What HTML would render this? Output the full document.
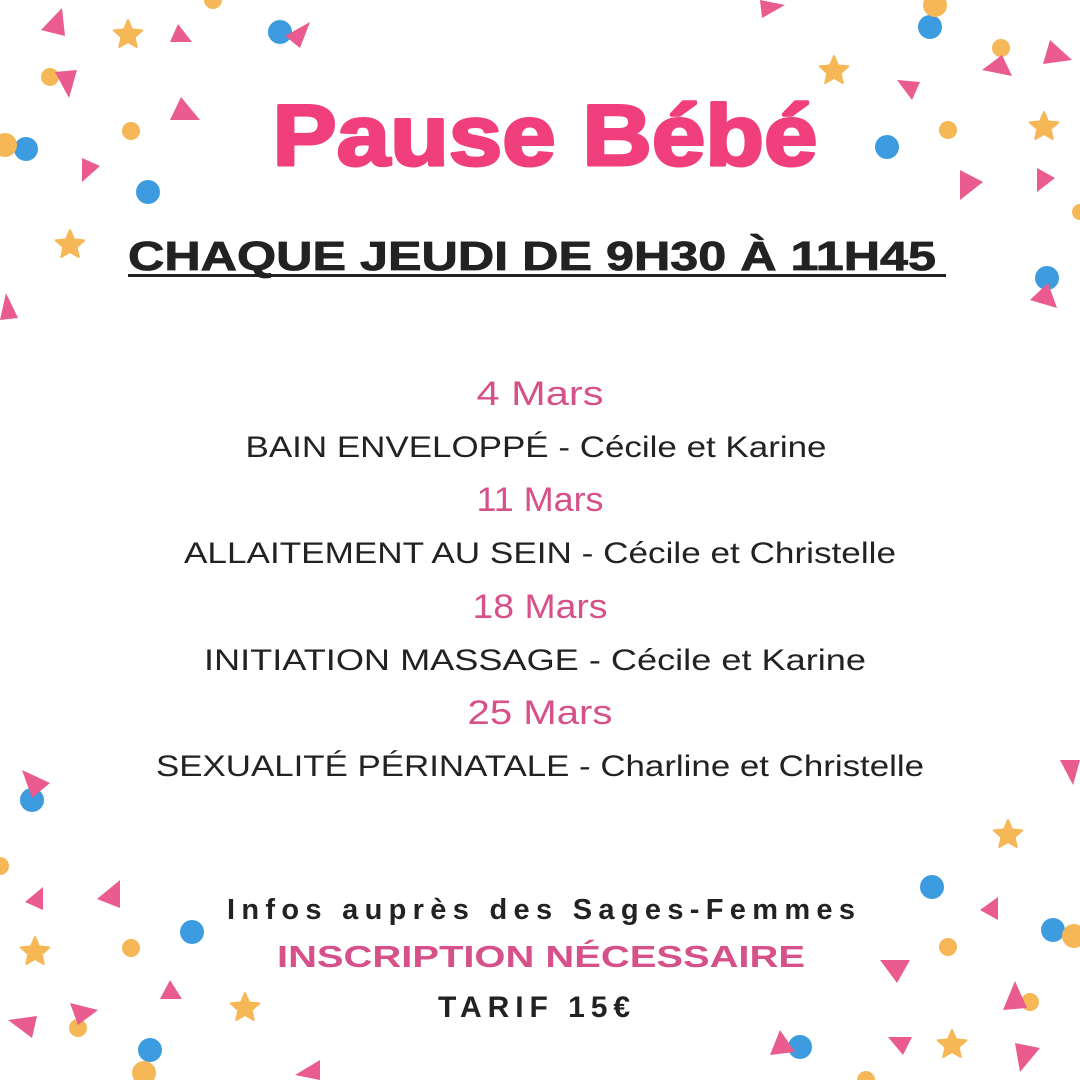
<!DOCTYPE html>
<html><head><meta charset="utf-8"><style>
html,body{margin:0;padding:0;background:#fff}
svg{display:block}
</style></head><body>
<svg width="1080" height="1080" viewBox="0 0 1080 1080" xmlns="http://www.w3.org/2000/svg">
<defs>
<polygon id="st" points="0,-15 4,-5.6 14.3,-4.6 6.6,2.2 8.8,12 0,7 -8.8,12 -6.6,2.2 -14.3,-4.6 -4,-5.6" fill="#f6b757" stroke="#f6b757" stroke-width="2" stroke-linejoin="round"/>
</defs>
<rect width="1080" height="1080" fill="#fff"/>
<g fill="#3d9be0">
<circle cx="280" cy="32" r="12"/><circle cx="26" cy="149" r="12"/><circle cx="148" cy="192" r="12"/>
<circle cx="930" cy="27" r="12"/><circle cx="887" cy="147" r="12"/><circle cx="1047" cy="278" r="12"/>
<circle cx="32" cy="800" r="12"/><circle cx="192" cy="932" r="12"/><circle cx="150" cy="1050" r="12"/>
<circle cx="932" cy="887" r="12"/><circle cx="1053" cy="930" r="12"/><circle cx="800" cy="1047" r="12"/>
</g>
<g fill="#f6b757">
<circle cx="935" cy="5" r="12"/><circle cx="50" cy="77" r="9"/><circle cx="131" cy="131" r="9"/><circle cx="5" cy="145" r="12"/>
<circle cx="1001" cy="48" r="9"/><circle cx="948" cy="130" r="9"/><circle cx="1080" cy="212" r="8"/>
<circle cx="0" cy="866" r="9"/><circle cx="131" cy="948" r="9"/><circle cx="78" cy="1028" r="9"/><circle cx="144" cy="1073" r="12"/><circle cx="213" cy="0" r="9"/>
<circle cx="1074" cy="936" r="12"/><circle cx="948" cy="947" r="9"/><circle cx="1030" cy="1002" r="9"/><circle cx="866" cy="1080" r="9"/>
</g>
<g fill="#ea5b8f">
<polygon points="62,8 65,36 41,30"/><polygon points="170,42 192,42 178,24"/><polygon points="285,36 310,22 300,48"/>
<polygon points="55,72 77,70 69,98"/><polygon points="170,120 200,120 181,97"/><polygon points="82,158 82,182 100,166"/>
<polygon points="0,320 18,318 6,293"/>
<polygon points="760,0 785,5 762,18"/><polygon points="897,80 920,82 912,100"/><polygon points="982,70 1012,76 1002,55"/>
<polygon points="1043,64 1072,60 1050,40"/><polygon points="960,170 960,200 983,182"/><polygon points="1037,168 1037,192 1055,178"/>
<polygon points="1030,300 1057,308 1048,283"/>
<polygon points="22,770 50,783 32,798"/><polygon points="43,887 43,910 25,902"/><polygon points="120,880 120,908 97,899"/>
<polygon points="160,999 182,999 170,980"/><polygon points="8,1020 37,1016 32,1038"/><polygon points="70,1003 98,1010 78,1025"/>
<polygon points="295,1075 320,1060 320,1080"/>
<polygon points="1060,760 1080,760 1073,785"/><polygon points="998,897 998,920 980,910"/><polygon points="880,960 910,960 897,983"/>
<polygon points="1015,981 1003,1010 1027,1008"/><polygon points="780,1030 795,1052 770,1055"/><polygon points="888,1037 912,1037 903,1055"/>
<polygon points="1015,1043 1040,1048 1020,1072"/>
</g>
<use href="#st" x="128" y="35"/><use href="#st" x="834" y="71"/><use href="#st" x="1044" y="127"/><use href="#st" x="70" y="245"/>
<use href="#st" x="1008" y="835"/><use href="#st" x="35" y="952"/><use href="#st" x="245" y="1008"/><use href="#st" x="952" y="1045"/>

<g font-family="Liberation Sans, sans-serif" text-anchor="middle">
<text x="545" y="165" font-size="86" font-weight="bold" fill="#f03f7c" stroke="#f03f7c" stroke-width="3" stroke-linejoin="round" textLength="545" lengthAdjust="spacingAndGlyphs">Pause Bébé</text>
<text x="532" y="270" font-size="41" font-weight="bold" fill="#222" stroke="#222" stroke-width="0.8" textLength="808" lengthAdjust="spacingAndGlyphs">CHAQUE JEUDI DE 9H30 À 11H45</text>
<rect x="128" y="274" width="818" height="3" fill="#222"/>
<g font-size="34" fill="#d6508a">
<text x="540" y="405" textLength="127" lengthAdjust="spacingAndGlyphs">4 Mars</text>
<text x="540" y="511" textLength="127" lengthAdjust="spacingAndGlyphs">11 Mars</text>
<text x="540" y="618" textLength="135" lengthAdjust="spacingAndGlyphs">18 Mars</text>
<text x="540" y="724" textLength="145" lengthAdjust="spacingAndGlyphs">25 Mars</text>
</g>
<g font-size="30" fill="#222">
<text x="536" y="457" textLength="581" lengthAdjust="spacingAndGlyphs">BAIN ENVELOPPÉ - Cécile et Karine</text>
<text x="540" y="563" textLength="712" lengthAdjust="spacingAndGlyphs">ALLAITEMENT AU SEIN - Cécile et Christelle</text>
<text x="535" y="670" textLength="662" lengthAdjust="spacingAndGlyphs">INITIATION MASSAGE - Cécile et Karine</text>
<text x="540" y="776" textLength="768" lengthAdjust="spacingAndGlyphs">SEXUALITÉ PÉRINATALE - Charline et Christelle</text>
</g>
<text x="541" y="919" font-size="29" font-weight="bold" fill="#222" textLength="628" lengthAdjust="spacing">Infos auprès des Sages-Femmes</text>
<text x="541" y="967" font-size="31" font-weight="bold" fill="#d6508a" textLength="528" lengthAdjust="spacingAndGlyphs">INSCRIPTION NÉCESSAIRE</text>
<text x="534" y="1017" font-size="30" font-weight="bold" fill="#222" textLength="192" lengthAdjust="spacing">TARIF 15€</text>
</g>
</svg>
</body></html>
